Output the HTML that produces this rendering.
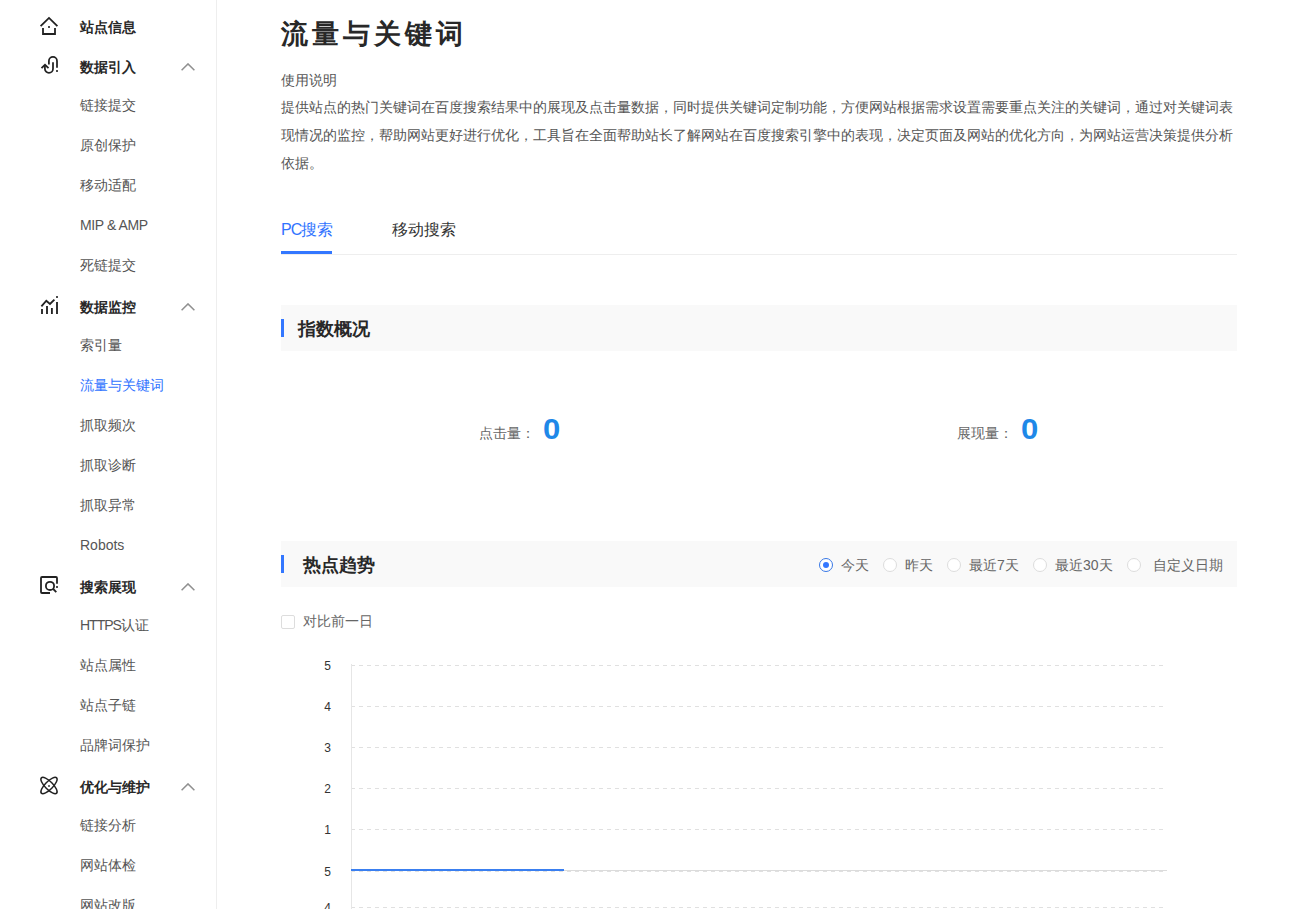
<!DOCTYPE html>
<html><head><meta charset="utf-8">
<style>
*{margin:0;padding:0;box-sizing:border-box}
html,body{width:1302px;height:909px;overflow:hidden;background:#fff}
body{font-family:"Liberation Sans",sans-serif;color:#333;position:relative}
.abs{position:absolute;white-space:nowrap}
#side{position:absolute;left:0;top:0;width:217px;height:909px;border-right:1px solid #eee}
.grp{position:absolute;left:80px;font-size:14px;font-weight:bold;color:#282828;line-height:20px}
.sub{position:absolute;left:80px;font-size:14px;color:#555;line-height:20px}
.sub.act{color:#2f73ff}
.ico{position:absolute;left:40px;width:18px;height:18px}
.chev{position:absolute;left:181px;width:14px;height:8px}
#main{position:absolute;left:281px;top:0;width:956px}
.radio{width:14px;height:14px;border:1px solid #ddd;border-radius:50%;background:#fff}
.rt{font-size:14px;line-height:20px;color:#666}
</style></head><body>
<div id="side">
  <svg class="abs" style="left:36px;top:13px" width="26" height="26" viewBox="36 13 26 26"><g fill="none" stroke="#222" stroke-width="1.8"><path d="M40.6 26.2L49 17.9L57.4 26.2"/><path d="M43 28V34H55V28"/></g><rect x="48.1" y="26.1" width="1.8" height="1.8" fill="#222"/></svg>
  <svg class="abs" style="left:36px;top:52px" width="26" height="26" viewBox="36 52 26 26"><g fill="none" stroke="#222" stroke-width="1.75"><path d="M41.5 68.2L45 64.8L48.5 68.2"/><path d="M44.9 65.2V68.7A4.05 4.05 0 0 0 53 68.7V62.2"/><path d="M48.9 64.6V60.9A4.05 4.05 0 0 1 57 60.9V67.7"/></g><rect x="56.1" y="70.1" width="1.8" height="1.8" fill="#222"/></svg>
  <svg class="abs" style="left:36px;top:292px" width="26" height="26" viewBox="36 292 26 26"><g fill="none" stroke="#222" stroke-width="1.85"><path d="M41.4 306.3L46.3 300.7L50 304L54.4 299.7"/><path d="M42 309V314M47 306V314M51.9 308V314M57 302V314"/></g><rect x="56.1" y="296.1" width="1.8" height="1.8" fill="#222"/></svg>
  <svg class="abs" style="left:36px;top:572px" width="26" height="26" viewBox="36 572 26 26"><g fill="none" stroke="#222" stroke-width="1.8"><path d="M57 583.7V578A1 1 0 0 0 56 577H42A1 1 0 0 0 41 578V592A1 1 0 0 0 42 593H50"/><circle cx="50" cy="585.9" r="4.1"/><path d="M53.2 589L56.3 592.1"/></g><rect x="56.1" y="586.1" width="1.8" height="1.8" fill="#222"/></svg>
  <svg class="abs" style="left:36px;top:772px" width="26" height="26" viewBox="36 772 26 26"><g fill="none" stroke="#222" stroke-width="1.5"><ellipse cx="49" cy="785.5" rx="10.8" ry="3.9" transform="rotate(45 49 785.5)"/><ellipse cx="49" cy="785.5" rx="10.8" ry="3.9" transform="rotate(-45 49 785.5)"/></g><rect x="48.2" y="785.2" width="1.6" height="1.6" fill="#222"/></svg>

  <div class="grp" style="top:17px">站点信息</div>
  <div class="grp" style="top:57px">数据引入</div>
  <svg class="chev" style="top:63px" viewBox="0 0 14 8"><path d="M0.6 7.2L7 0.9L13.4 7.2" fill="none" stroke="#909090" stroke-width="1.5"/></svg>
  <div class="sub" style="top:95px">链接提交</div>
  <div class="sub" style="top:135px">原创保护</div>
  <div class="sub" style="top:175px">移动适配</div>
  <div class="sub" style="top:215px;letter-spacing:-0.4px">MIP &amp; AMP</div>
  <div class="sub" style="top:255px">死链提交</div>
  <div class="grp" style="top:297px">数据监控</div>
  <svg class="chev" style="top:303px" viewBox="0 0 14 8"><path d="M0.6 7.2L7 0.9L13.4 7.2" fill="none" stroke="#909090" stroke-width="1.5"/></svg>
  <div class="sub" style="top:335px">索引量</div>
  <div class="sub act" style="top:375px">流量与关键词</div>
  <div class="sub" style="top:415px">抓取频次</div>
  <div class="sub" style="top:455px">抓取诊断</div>
  <div class="sub" style="top:495px">抓取异常</div>
  <div class="sub" style="top:535px">Robots</div>
  <div class="grp" style="top:577px">搜索展现</div>
  <svg class="chev" style="top:583px" viewBox="0 0 14 8"><path d="M0.6 7.2L7 0.9L13.4 7.2" fill="none" stroke="#909090" stroke-width="1.5"/></svg>
  <div class="sub" style="top:615px"><span style="letter-spacing:-1px">HTTPS</span>认证</div>
  <div class="sub" style="top:655px">站点属性</div>
  <div class="sub" style="top:695px">站点子链</div>
  <div class="sub" style="top:735px">品牌词保护</div>
  <div class="grp" style="top:777px">优化与维护</div>
  <svg class="chev" style="top:783px" viewBox="0 0 14 8"><path d="M0.6 7.2L7 0.9L13.4 7.2" fill="none" stroke="#909090" stroke-width="1.5"/></svg>
  <div class="sub" style="top:815px">链接分析</div>
  <div class="sub" style="top:855px">网站体检</div>
  <div class="sub" style="top:895px">网站改版</div>
</div>

<div id="main">
  <div class="abs" style="left:0;top:14px;font-size:27px;letter-spacing:4px;font-weight:bold;line-height:40px;color:#282828">流量与关键词</div>
  <div class="abs" style="left:0;top:70px;font-size:14px;line-height:20px;color:#555">使用说明</div>
  <div class="abs" style="left:0;top:93px;width:956px;white-space:normal;font-size:14px;line-height:28px;color:#555">提供站点的热门关键词在百度搜索结果中的展现及点击量数据，同时提供关键词定制功能，方便网站根据需求设置需要重点关注的关键词，通过对关键词表现情况的监控，帮助网站更好进行优化，工具旨在全面帮助站长了解网站在百度搜索引擎中的表现，决定页面及网站的优化方向，为网站运营决策提供分析依据。</div>

  <div class="abs" style="left:0;top:219px;font-size:16px;line-height:22px;color:#2f73ff"><span style="letter-spacing:-1px">PC</span>搜索</div>
  <div class="abs" style="left:111px;top:219px;font-size:16px;line-height:22px;color:#333">移动搜索</div>
  <div class="abs" style="left:0;top:254px;width:956px;height:1px;background:#eee"></div>
  <div class="abs" style="left:0;top:251px;width:51px;height:3px;background:#3377ff"></div>

  <div class="abs" style="left:0;top:305px;width:956px;height:46px;background:#f9f9f9"></div>
  <div class="abs" style="left:0;top:319px;width:3px;height:18px;background:#3377ff"></div>
  <div class="abs" style="left:17px;top:316px;font-size:18px;font-weight:bold;line-height:26px;color:#282828">指数概况</div>

  <div class="abs" style="left:198px;top:423px;font-size:14px;line-height:20px;color:#666">点击量：</div>
  <div class="abs" style="left:262px;top:412px;font-size:29px;font-weight:bold;line-height:34px;color:#1f88e8;transform:scaleX(1.07);transform-origin:0 0">0</div>
  <div class="abs" style="left:676px;top:423px;font-size:14px;line-height:20px;color:#666">展现量：</div>
  <div class="abs" style="left:740px;top:412px;font-size:29px;font-weight:bold;line-height:34px;color:#1f88e8;transform:scaleX(1.07);transform-origin:0 0">0</div>

  <div class="abs" style="left:0;top:541px;width:956px;height:46px;background:#f9f9f9"></div>
  <div class="abs" style="left:0;top:555px;width:3px;height:18px;background:#3377ff"></div>
  <div class="abs" style="left:22px;top:552px;font-size:18px;font-weight:bold;line-height:26px;color:#282828">热点趋势</div>

  <div class="abs" style="left:538px;top:558px;width:14px;height:14px;border:1px solid #3878e6;border-radius:50%;background:#fff"></div>
  <div class="abs" style="left:542px;top:562px;width:6px;height:6px;border-radius:50%;background:#3377ff"></div>
  <div class="abs rt" style="left:560px;top:555px">今天</div>
  <div class="abs radio" style="left:602px;top:558px"></div>
  <div class="abs rt" style="left:624px;top:555px">昨天</div>
  <div class="abs radio" style="left:666px;top:558px"></div>
  <div class="abs rt" style="left:688px;top:555px">最近7天</div>
  <div class="abs radio" style="left:752px;top:558px"></div>
  <div class="abs rt" style="left:774px;top:555px">最近30天</div>
  <div class="abs radio" style="left:846px;top:558px"></div>
  <div class="abs rt" style="left:872px;top:555px">自定义日期</div>

  <div class="abs" style="left:0;top:615px;width:14px;height:14px;border:1px solid #ddd;border-radius:2px;background:#fff"></div>
  <div class="abs rt" style="left:22px;top:611px">对比前一日</div>
</div>
<svg class="abs" style="left:0;top:0" width="1302" height="909" viewBox="0 0 1302 909">
  <g stroke="#e0e0e0" stroke-width="1" stroke-dasharray="4 4" fill="none">
    <path d="M351 665.5H1163M351 706.5H1163M351 747.5H1163M351 788.5H1163M351 829.5H1163M351 871.5H1163M351 907.5H1163"/>
  </g>
  <path d="M351.5 664V909" stroke="#e6e6e6" stroke-width="1"/>
  <path d="M351 870.5H1167" stroke="#dcdcdc" stroke-width="1"/>
  <path d="M351 870H564" stroke="#3a7ff0" stroke-width="2"/>
  <g font-family="Liberation Sans" font-size="12" fill="#333" text-anchor="end">
    <text x="331" y="670">5</text><text x="331" y="711">4</text><text x="331" y="752">3</text>
    <text x="331" y="793">2</text><text x="331" y="834">1</text><text x="331" y="876">5</text><text x="331" y="912">4</text>
  </g>
</svg>
</body></html>
